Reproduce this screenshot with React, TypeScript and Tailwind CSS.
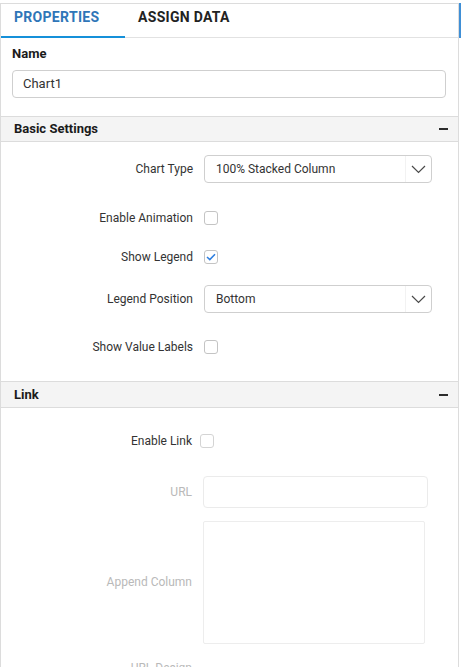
import React from 'react';

const ChevronDown = () => (
  <svg width="15" height="9" viewBox="0 0 15 9" fill="none">
    <path d="M1 1 L7.5 7.5 L14 1" stroke="#4a4a4a" strokeWidth="1.2" />
  </svg>
);

const Minus = () => <div className="w-[9px] h-[2px] bg-[#2b2b2b]" />;

const Checkbox = ({ checked = false, muted = false }: { checked?: boolean; muted?: boolean }) => (
  <div
    className={`w-[14px] h-[14px] rounded-[3px] border flex items-center justify-center bg-white ${
      muted ? 'border-[#d4d4d4]' : 'border-[#c4c4c4]'
    }`}
  >
    {checked && (
      <svg width="10" height="8" viewBox="0 0 10 8" fill="none">
        <path d="M1 4 L3.8 6.6 L9 1.2" stroke="#2f7fe0" strokeWidth="1.5" />
      </svg>
    )}
  </div>
);

const Select = ({ value }: { value: string }) => (
  <div className="ml-[11px] w-[228px] h-[28px] border border-[#cfcfcf] rounded-[4px] flex items-center bg-white">
    <span className="flex-1 pl-[11px] text-[12px] text-[#333]">{value}</span>
    <div className="w-[26px] h-full border-l border-[#f2f2f2] flex items-center justify-center">
      <ChevronDown />
    </div>
  </div>
);

const SectionHeader = ({ title, h }: { title: string; h: string }) => (
  <div className={`${h} bg-[#f4f4f4] border-y border-[#dcdcdc] flex items-center justify-between pl-[13px] pr-[10px]`}>
    <span className="text-[13px] font-bold text-[#1b1b1b]">{title}</span>
    <Minus />
  </div>
);

const Label = ({ text, muted = false, w = 'w-[192px]' }: { text: string; muted?: boolean; w?: string }) => (
  <div className={`${w} shrink-0 text-right text-[12px] leading-[15px] ${muted ? 'text-[#b9b9b9]' : 'text-[#333]'}`}>
    {text}
  </div>
);

export default function App() {
  return (
    <div className="w-[461px] min-h-screen bg-white flex font-['Roboto',sans-serif]">
      <div className="w-[459px] mt-[3px] border-t border-l border-r border-[#dcdcdc]">
        {/* Tabs */}
        <div className="flex h-[34px] border-b border-[#e2e2e2]">
          <div className="w-[124px] pl-[13px] pt-[5px] border-b-2 border-[#1590d9] -mb-px text-[14px] leading-[16px] tracking-[0.3px] font-bold text-[#2f76b8]">
            PROPERTIES
          </div>
          <div className="pl-[13px] pt-[5px] text-[14px] leading-[16px] tracking-[0.3px] font-bold text-[#222]">
            ASSIGN DATA
          </div>
        </div>

        {/* Name */}
        <div className="pt-[8px] pl-[11px] pr-[12px] pb-[18px]">
          <div className="text-[13px] leading-[15px] font-bold text-[#1b1b1b]">Name</div>
          <div className="mt-[9px] h-[28px] border border-[#cfcfcf] rounded-[4px] flex items-center pl-[10px] text-[13px] text-[#333]">
            Chart1
          </div>
        </div>

        {/* Basic Settings */}
        <SectionHeader title="Basic Settings" h="h-[26px]" />
        <div className="pt-[13px] pb-[27px]">
          <div className="flex items-center">
            <Label text="Chart Type" />
            <Select value="100% Stacked Column" />
          </div>
          <div className="flex items-center mt-[28px] h-[14px]">
            <Label text="Enable Animation" />
            <div className="ml-[11px]">
              <Checkbox />
            </div>
          </div>
          <div className="flex items-center mt-[25px] h-[14px]">
            <Label text="Show Legend" />
            <div className="ml-[11px]">
              <Checkbox checked />
            </div>
          </div>
          <div className="flex items-center mt-[21px]">
            <Label text="Legend Position" />
            <Select value="Bottom" />
          </div>
          <div className="flex items-center mt-[27px] h-[14px]">
            <Label text="Show Value Labels" />
            <div className="ml-[11px]">
              <Checkbox />
            </div>
          </div>
        </div>

        {/* Link */}
        <SectionHeader title="Link" h="h-[27px]" />
        <div className="pt-[26px]">
          <div className="flex items-center h-[14px]">
            <Label text="Enable Link" w="w-[191px]" />
            <div className="ml-[8px]">
              <Checkbox muted />
            </div>
          </div>
          <div className="flex items-center mt-[28px]">
            <Label text="URL" muted w="w-[191px]" />
            <div className="ml-[11px] w-[225px] h-[32px] border border-[#ebebeb] rounded-[4px]" />
          </div>
          <div className="flex items-center mt-[13px]">
            <Label text="Append Column" muted w="w-[191px]" />
            <div className="ml-[11px] w-[222px] h-[123px] border border-[#ededed] rounded-[2px]" />
          </div>
          <div className="flex items-center mt-[17px] pb-[20px]">
            <Label text="URL Design" muted w="w-[191px]" />
          </div>
        </div>
      </div>
      <div className="w-[2px] mt-[3px]">
        <div className="h-[35px] bg-[#3f8fd6]" />
      </div>
    </div>
  );
}
